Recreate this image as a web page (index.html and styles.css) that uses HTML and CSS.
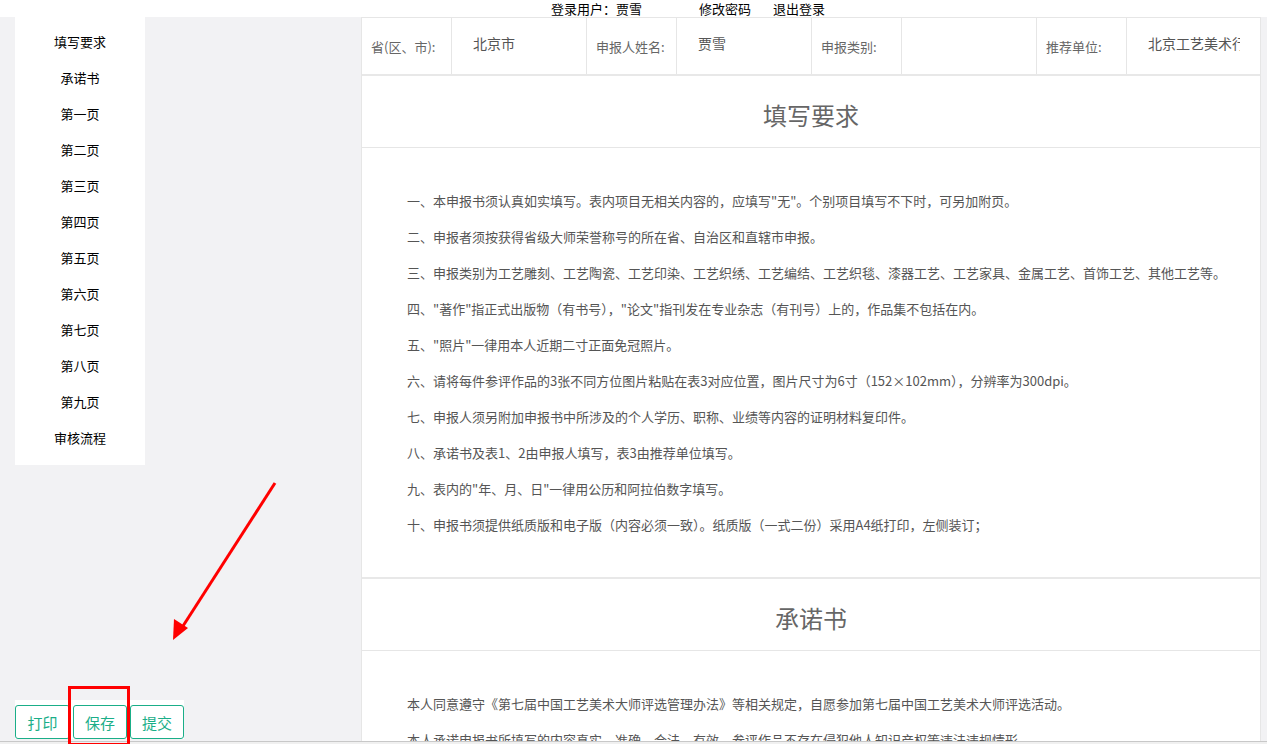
FILE: index.html
```html
<!DOCTYPE html>
<html>
<head>
  <title>申报书填写</title>
  <meta charset="utf-8">
  <link rel="stylesheet" href="styles.css">
</head>
<body>
  <div class="topbar">
    <span class="user">登录用户：贾雪</span>
    <a class="top-link pw">修改密码</a>
    <a class="top-link">退出登录</a>
  </div>

  <div class="layout">
    <div class="side">
      <ul class="nav">
        <li>填写要求</li>
        <li>承诺书</li>
        <li>第一页</li>
        <li>第二页</li>
        <li>第三页</li>
        <li>第四页</li>
        <li>第五页</li>
        <li>第六页</li>
        <li>第七页</li>
        <li>第八页</li>
        <li>第九页</li>
        <li>审核流程</li>
      </ul>
      <div class="actions">
        <button class="btn">打印</button>
        <button class="btn">保存</button>
        <button class="btn">提交</button>
      </div>
    </div>

    <div class="panel">
      <div class="info-row">
        <div class="label">省(区、市):</div>
        <div class="value"><span class="val-text">北京市</span></div>
        <div class="label">申报人姓名:</div>
        <div class="value"><span class="val-text">贾雪</span></div>
        <div class="label">申报类别:</div>
        <div class="value"><span class="val-text"></span></div>
        <div class="label">推荐单位:</div>
        <div class="value"><span class="val-text">北京工艺美术行业协会</span></div>
      </div>

      <div class="section">
        <div class="section-title">填写要求</div>
        <div class="section-body">
          <p>一、本申报书须认真如实填写。表内项目无相关内容的，应填写"无"。个别项目填写不下时，可另加附页。</p>
          <p>二、申报者须按获得省级大师荣誉称号的所在省、自治区和直辖市申报。</p>
          <p>三、申报类别为工艺雕刻、工艺陶瓷、工艺印染、工艺织绣、工艺编结、工艺织毯、漆器工艺、工艺家具、金属工艺、首饰工艺、其他工艺等。</p>
          <p>四、"著作"指正式出版物（有书号），"论文"指刊发在专业杂志（有刊号）上的，作品集不包括在内。</p>
          <p>五、"照片"一律用本人近期二寸正面免冠照片。</p>
          <p>六、请将每件参评作品的3张不同方位图片粘贴在表3对应位置，图片尺寸为6寸（152×102mm），分辨率为300dpi。</p>
          <p>七、申报人须另附加申报书中所涉及的个人学历、职称、业绩等内容的证明材料复印件。</p>
          <p>八、承诺书及表1、2由申报人填写，表3由推荐单位填写。</p>
          <p>九、表内的"年、月、日"一律用公历和阿拉伯数字填写。</p>
          <p>十、申报书须提供纸质版和电子版（内容必须一致）。纸质版（一式二份）采用A4纸打印，左侧装订；</p>
        </div>
      </div>

      <div class="section">
        <div class="section-title">承诺书</div>
        <div class="section-body">
          <p>本人同意遵守《第七届中国工艺美术大师评选管理办法》等相关规定，自愿参加第七届中国工艺美术大师评选活动。</p>
          <p>本人承诺申报书所填写的内容真实、准确、合法、有效，参评作品不存在侵犯他人知识产权等违法违规情形。</p>
        </div>
      </div>
    </div>
    <div class="gutter"></div>
  </div>
  <div class="bottom-strip"></div>

  <!-- annotation -->
  <div class="mark-box"></div>
  <svg class="mark-arrow" width="1267" height="744" viewBox="0 0 1267 744">
    <line x1="275" y1="483" x2="183" y2="626" stroke="#ff0000" stroke-width="3"/>
    <polygon points="173,640 174,619 188,628" fill="#ff0000"/>
  </svg>
</body>
</html>
```

FILE: styles.css
```css
* {
  box-sizing: border-box;
}

html, body {
  margin: 0;
  height: 744px;
  overflow: hidden;
}

body {
  display: flex;
  flex-direction: column;
  font-family: "Noto Sans CJK SC", "Liberation Sans", sans-serif;
  font-size: 13px;
  color: #000;
  background: #f2f2f4;
}

.topbar {
  height: 17px;
  flex-shrink: 0;
  background: #fff;
  display: flex;
  align-items: center;
  padding-left: 551px;
  line-height: 17px;
  font-size: 13px;
}

.top-link {
  color: #000;
  margin-left: 22px;
  cursor: pointer;
}

.top-link.pw {
  margin-left: 57px;
}

.layout {
  flex: 1;
  display: flex;
  min-height: 0;
}

.side {
  width: 361px;
  flex-shrink: 0;
  display: flex;
  flex-direction: column;
  justify-content: space-between;
  align-items: flex-start;
  padding: 0 0 2px 15px;
}

.nav {
  list-style: none;
  margin: 0;
  width: 130px;
  padding: 7px 0 9px;
  background: #fff;
}

.nav li {
  height: 36px;
  line-height: 36px;
  text-align: center;
  cursor: pointer;
}

.actions {
  display: flex;
  gap: 3px;
  padding-top: 5px;
  background: #fff;
}

.btn {
  height: 34px;
  width: 55px;
  padding: 0;
  background: #fff;
  color: #1aae88;
  border: 1px solid #1aae88;
  border-radius: 3px;
  font-family: inherit;
  font-size: 15px;
  cursor: pointer;
}

.btn + .btn {
  width: 54px;
}

.panel {
  width: 900px;
  flex-shrink: 0;
  background: #fff;
  border: 1px solid #e6e6e6;
  border-bottom: none;
  overflow: hidden;
}

.gutter {
  flex: 1;
}

.info-row {
  display: flex;
  height: 58px;
  border-bottom: 2px solid #e8e8e8;
}

.label {
  width: 90px;
  flex-shrink: 0;
  padding-left: 9px;
  display: flex;
  align-items: center;
  color: #666;
  font-size: 13px;
  border-right: 1px solid #e6e6e6;
  white-space: nowrap;
}

.value {
  width: 135px;
  flex-shrink: 0;
  padding: 0 20px 6px 21px;
  display: flex;
  align-items: center;
  color: #555;
  font-size: 14px;
  border-right: 1px solid #e6e6e6;
}

.value:last-child {
  border-right: none;
  width: 133px;
}

.val-text {
  display: block;
  width: 100%;
  white-space: nowrap;
  overflow: hidden;
}

.section {
  border-bottom: 2px solid #e8e8e8;
}

.section-title {
  padding: 25px 0 18px;
  line-height: 28px;
  text-align: center;
  font-size: 24px;
  color: #666;
  border-bottom: 1px solid #e6e6e6;
}

.section-body {
  padding: 35px 0 34px 45px;
}

.section-body p {
  margin: 0;
  line-height: 36px;
  color: #555;
  font-size: 13px;
  white-space: nowrap;
}

.bottom-strip {
  height: 3px;
  flex-shrink: 0;
  border-top: 1px solid #c8c8c8;
  background: #f0f0f0;
}

.mark-box {
  position: absolute;
  left: 68px;
  top: 686px;
  width: 62px;
  height: 60px;
  border: 3px solid #ff0000;
  pointer-events: none;
}

.mark-arrow {
  position: absolute;
  left: 0;
  top: 0;
  pointer-events: none;
}
```
